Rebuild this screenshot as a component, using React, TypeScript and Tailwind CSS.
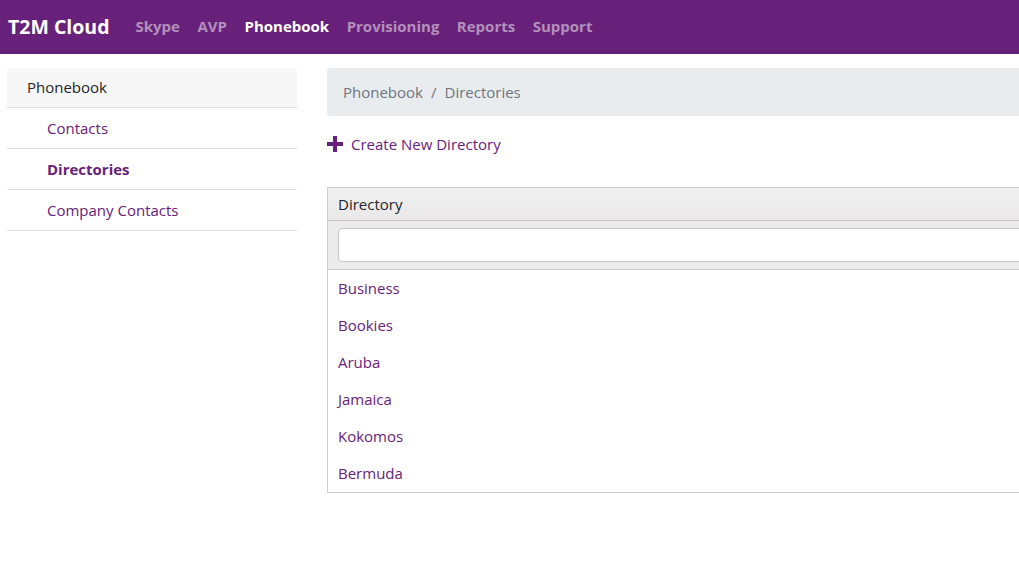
import React from 'react';

export default function App() {
  const navItems = [
    { label: 'Skype', active: false },
    { label: 'AVP', active: false },
    { label: 'Phonebook', active: true },
    { label: 'Provisioning', active: false },
    { label: 'Reports', active: false },
    { label: 'Support', active: false },
  ];

  const sideItems = [
    { label: 'Contacts', active: false },
    { label: 'Directories', active: true },
    { label: 'Company Contacts', active: false },
  ];

  const directories = ['Business', 'Bookies', 'Aruba', 'Jamaica', 'Kokomos', 'Bermuda'];

  return (
    <div className="w-[1019px] h-[585px] overflow-hidden bg-white font-['Open_Sans',sans-serif] text-[#212529] text-[15px]">
      <nav className="h-[54px] bg-[#68217a] flex items-center pl-2">
        <span className="text-white font-bold text-[19.5px] mr-[26px] -mt-[1px]">T2M Cloud</span>
        <ul className="flex gap-[17.5px] -mt-[1px]">
          {navItems.map((item) => (
            <li
              key={item.label}
              className={`text-[15px] font-bold ${item.active ? 'text-white' : 'text-[#b390bc]'}`}
            >
              {item.label}
            </li>
          ))}
        </ul>
      </nav>

      <div className="flex pt-[14px] pl-[7px] gap-[30px]">
        <aside className="w-[290px] shrink-0">
          <div className="h-[40px] bg-[#f7f7f7] rounded-t border-b border-[#dddddd] flex items-center pl-5">
            Phonebook
          </div>
          {sideItems.map((item) => (
            <div
              key={item.label}
              className={`h-[41px] border-b border-[#dddddd] flex items-center pl-10 text-[#68217a] ${item.active ? 'font-bold' : ''}`}
            >
              {item.label}
            </div>
          ))}
        </aside>

        <main className="w-[760px] shrink-0">
          <div className="h-[48px] bg-[#e9ecef] rounded flex items-center px-4 text-[#6c757d]">
            <span>Phonebook</span>
            <span className="px-2">/</span>
            <span>Directories</span>
          </div>

          <div className="mt-[16px] h-[24px] flex items-center gap-2 text-[#68217a]">
            <svg width="16" height="16" viewBox="0 0 16 16">
              <path d="M6 0h4v6h6v4h-6v6H6v-6H0V6h6z" fill="#68217a" />
            </svg>
            <span>Create New Directory</span>
          </div>

          <div className="mt-[31px] border border-[#cccccc]">
            <div className="h-[33px] bg-gradient-to-b from-[#f1f1f1] to-[#eae8e8] border-b border-[#c5c5c5] flex items-center px-[10px]">
              Directory
            </div>
            <div className="h-[49px] bg-[#ebebeb] border-b border-[#c9c9c9] flex items-center px-[10px]">
              <input className="w-full h-[34px] bg-white border border-[#c5c5c5] rounded outline-none" />
            </div>
            {directories.map((d) => (
              <div key={d} className="h-[37px] flex items-center px-[10px] text-[#68217a]">
                {d}
              </div>
            ))}
          </div>
        </main>
      </div>
    </div>
  );
}
